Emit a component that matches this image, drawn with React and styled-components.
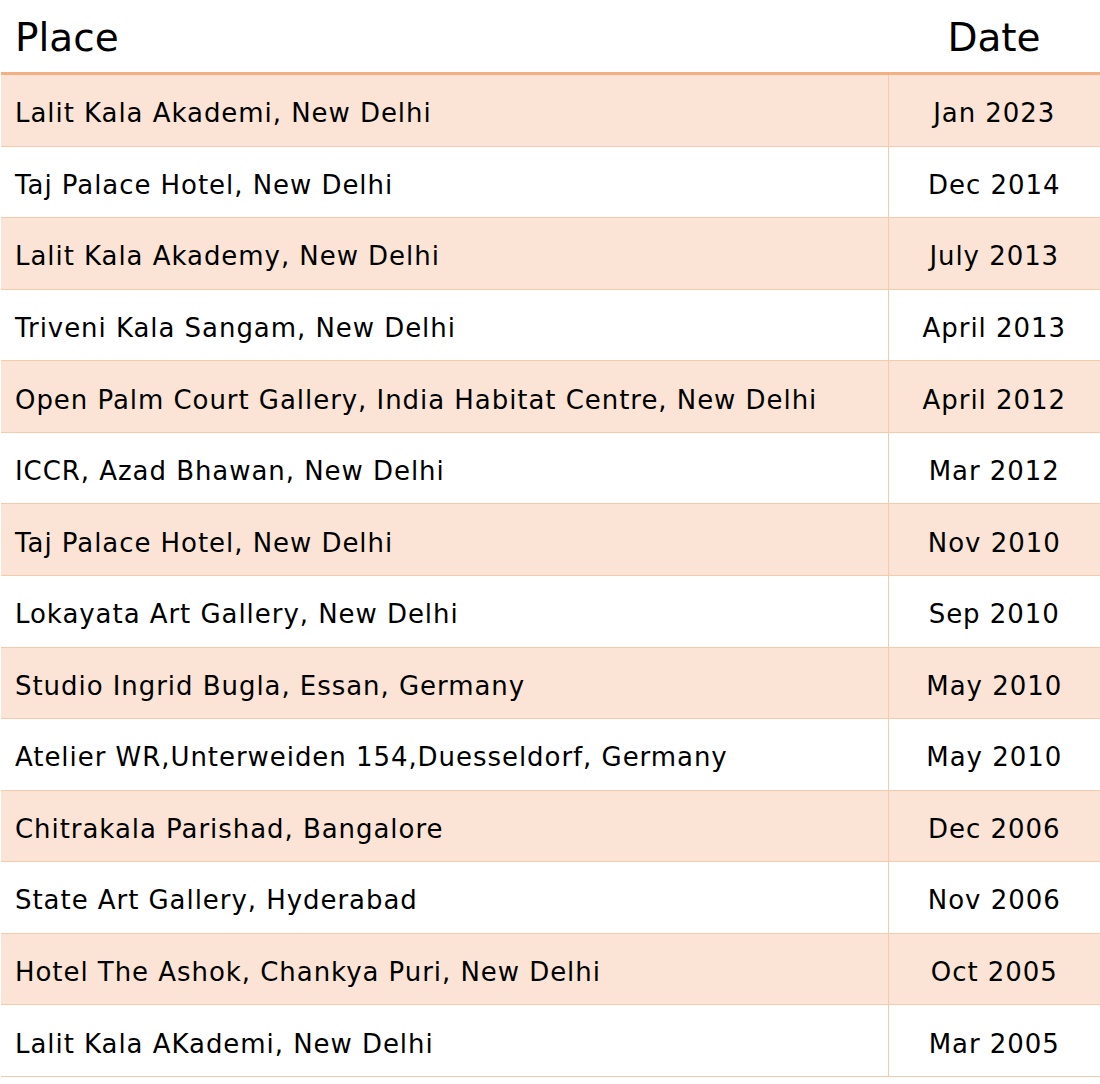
import styled, { createGlobalStyle } from 'styled-components';

const GlobalStyle = createGlobalStyle`
  body {
    margin: 0;
    background: #fff;
    font-family: "DejaVu Sans", Verdana, sans-serif;
    color: #000;
  }
`

const Table = styled.table`
  width: 1099px;
  margin-left: 1px;
  border-collapse: collapse;
  table-layout: fixed;
`

const HeadCell = styled.th`
  height: 70px;
  padding: 2px 14px 0 14px;
  font-size: 39px;
  font-weight: normal;
  text-align: ${(p) => (p.center ? 'center' : 'left')};
  border-bottom: 3px solid #f4b083;
  width: ${(p) => (p.w ? `${p.w}px` : 'auto')};
  vertical-align: middle;
`

const Row = styled.tr`
  background: ${(p) => (p.shade ? '#fbe4d5' : '#fff')};
  border-bottom: 1px solid #f7caac;
`

const Cell = styled.td`
  height: 64.57px;
  padding: 6px 14px 0 14px;
  font-size: 26px;
  letter-spacing: 0.95px;
  text-align: ${(p) => (p.center ? 'center' : 'left')};
  border-left: ${(p) => (p.center ? '1px solid #f7caac' : 'none')};
  vertical-align: middle;
  white-space: nowrap;
`

const shows = [
  ['Lalit Kala Akademi, New Delhi', 'Jan 2023'],
  ['Taj Palace Hotel, New Delhi', 'Dec 2014'],
  ['Lalit Kala Akademy, New Delhi', 'July 2013'],
  ['Triveni Kala Sangam, New Delhi', 'April 2013'],
  ['Open Palm Court Gallery, India Habitat Centre, New Delhi', 'April 2012'],
  ['ICCR, Azad Bhawan, New Delhi', 'Mar 2012'],
  ['Taj Palace Hotel, New Delhi', 'Nov 2010'],
  ['Lokayata Art Gallery, New Delhi', 'Sep 2010'],
  ['Studio Ingrid Bugla, Essan, Germany', 'May 2010'],
  ['Atelier WR,Unterweiden 154,Duesseldorf, Germany', 'May 2010'],
  ['Chitrakala Parishad, Bangalore', 'Dec 2006'],
  ['State Art Gallery, Hyderabad', 'Nov 2006'],
  ['Hotel The Ashok, Chankya Puri, New Delhi', 'Oct 2005'],
  ['Lalit Kala AKademi, New Delhi', 'Mar 2005'],
]

function App() {
  return (
    <>
      <GlobalStyle />
      <Table>
        <thead>
          <tr>
            <HeadCell>Place</HeadCell>
            <HeadCell center w={184}>Date</HeadCell>
          </tr>
        </thead>
        <tbody>
          {shows.map(([place, date], i) => (
            <Row key={`${place}-${date}`} shade={i % 2 === 0}>
              <Cell>{place}</Cell>
              <Cell center>{date}</Cell>
            </Row>
          ))}
        </tbody>
      </Table>
    </>
  );
}

export default App;
